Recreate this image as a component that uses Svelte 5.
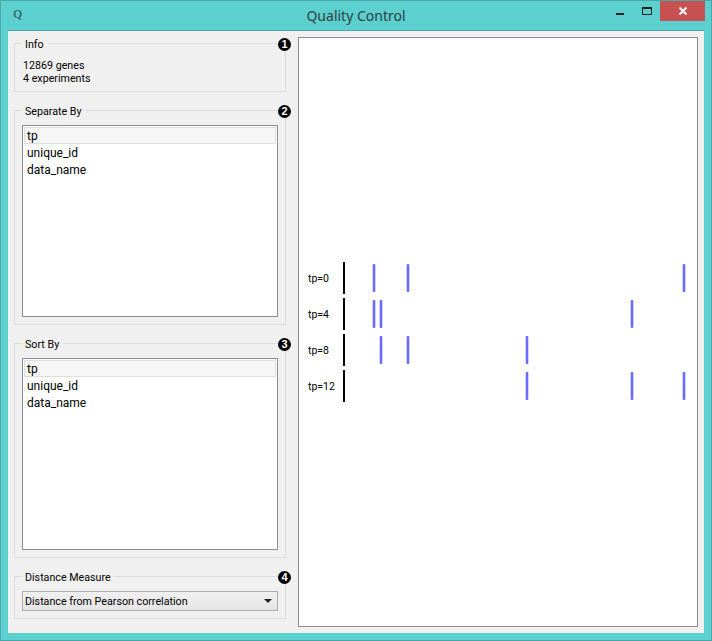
<script lang="ts">
  const groups = [
    { title: 'Separate By', badge: '2' },
    { title: 'Sort By', badge: '3' }
  ]
  const items = ['tp', 'unique_id', 'data_name']

  const rows = [
    { label: 'tp=0', y: 262, marks: [374, 408, 684] },
    { label: 'tp=4', y: 298, marks: [374, 381, 632] },
    { label: 'tp=8', y: 334, marks: [381, 408, 527] },
    { label: 'tp=12', y: 370, marks: [527, 632, 684] }
  ]
  // plot frame origin in window coordinates
  const ox = 299
  const oy = 38
</script>

<div class="window">
  <header class="titlebar">
    <span class="app-icon">Q</span>
    <span class="title">Quality Control</span>
    <div class="controls">
      <svg class="ctl" width="27" height="20" viewBox="0 0 27 20">
        <rect x="9" y="12" width="8" height="2" fill="#222" />
      </svg>
      <svg class="ctl" width="26" height="20" viewBox="0 0 26 20">
        <path d="M8.5 7.5h9v6h-9z" fill="none" stroke="#222" />
        <rect x="8" y="6" width="10" height="2" fill="#222" />
      </svg>
      <div class="close">
        <svg width="10" height="8" viewBox="0 0 10 8">
          <path d="M1.5 .5L8.5 7.5M8.5 .5L1.5 7.5" stroke="#fff" stroke-width="2" fill="none" />
        </svg>
      </div>
    </div>
  </header>

  <div class="body">
    <aside class="side">
      <section class="box info">
        <h3><span>Info</span></h3>
        <i class="badge">1</i>
        <p>12869 genes<br />4 experiments</p>
      </section>

      {#each groups as g}
        <section class="box listbox">
          <h3><span>{g.title}</span></h3>
          <i class="badge">{g.badge}</i>
          <ul>
            {#each items as item, i}
              <li class:current={i === 0}>{item}</li>
            {/each}
          </ul>
        </section>
      {/each}

      <section class="box distance">
        <h3><span>Distance Measure</span></h3>
        <i class="badge">4</i>
        <div class="combo">
          <span>Distance from Pearson correlation</span>
          <b class="arrow"></b>
        </div>
      </section>
    </aside>

    <main class="plot">
      <svg width="398" height="588" viewBox="0 0 398 588">
        {#each rows as r}
          <text x={308 - ox} y={r.y + 20 - oy} class="lbl">{r.label}</text>
          <rect x={343 - ox} y={r.y - oy} width="2" height="32" fill="#000" />
          {#each r.marks as m}
            <rect x={m - 1.3 - ox} y={r.y + 2 - oy} width="2.6" height="28" rx="1" fill="#6a6aff" />
          {/each}
        {/each}
      </svg>
    </main>
  </div>
</div>

<style>
  :global(body) {
    margin: 0;
    background: #5ccfcf;
  }

  .window {
    width: 712px;
    height: 641px;
    box-sizing: border-box;
    border: 1px solid #4aa8a8;
    padding: 0 7px 7px;
    background: #5ccfcf;
    display: flex;
    flex-direction: column;
    font-family: Roboto, "Noto Sans", sans-serif;
    font-size: 11px;
    color: #000;
  }

  .titlebar {
    height: 29px;
    flex: none;
    position: relative;
    display: flex;
    align-items: center;
    justify-content: center;
    border-bottom: 1px solid #4aa8a8;
  }

  .app-icon {
    position: absolute;
    left: 5px;
    top: 6px;
    font-family: "Liberation Serif", serif;
    font-weight: bold;
    font-size: 12px;
    color: #3c6f70;
  }

  .title {
    font-family: "Noto Sans", sans-serif;
    font-size: 14px;
    color: #2f3f40;
  }

  .controls {
    position: absolute;
    right: -1px;
    top: 0;
    display: flex;
    align-items: flex-start;
  }

  .ctl {
    display: block;
  }

  .close {
    width: 45px;
    height: 20px;
    background: #c75050;
    display: flex;
    align-items: center;
    justify-content: center;
  }

  .body {
    flex: 1;
    background: #f0f0f0;
    padding: 6px;
    display: flex;
    gap: 12px;
    min-height: 0;
  }

  .side {
    width: 272px;
    flex: none;
    display: flex;
    flex-direction: column;
    gap: 18px;
    padding-top: 6px;
  }

  .box {
    position: relative;
    box-sizing: border-box;
    border: 1px solid #dcdcdc;
  }

  .box h3 {
    margin: 0;
    position: absolute;
    left: 6px;
    top: -6px;
    font: inherit;
    font-size: 10.7px;
    line-height: 14px;
  }

  .box h3 span {
    background: #f0f0f0;
    padding: 0 4px;
    display: block;
  }

  .badge {
    position: absolute;
    right: -6px;
    top: -6px;
    width: 13px;
    height: 13px;
    border-radius: 50%;
    background: #000;
    color: #fff;
    font: normal bold 11px/13px "Liberation Sans", sans-serif;
    text-align: center;
  }

  .info {
    height: 49px;
  }

  .info p {
    margin: 15px 0 0 8px;
    line-height: 13px;
    font-size: 10.7px;
  }

  .listbox {
    height: 215px;
    padding: 14px 7px 6px;
  }

  ul {
    margin: 0;
    padding: 1px;
    list-style: none;
    box-sizing: border-box;
    height: 192px;
    width: 256px;
    background: #fff;
    border: 1px solid #8c8c96;
  }

  li {
    height: 17px;
    line-height: 19px;
    padding-left: 3px;
    font-size: 12px;
    box-sizing: border-box;
  }

  li.current {
    background: #f6f6f6;
    border: 1px solid #dedede;
    line-height: 17px;
    padding-left: 2px;
  }

  .distance {
    height: 43px;
    padding: 14px 7px 0;
  }

  .combo {
    box-sizing: border-box;
    height: 20px;
    width: 256px;
    border: 1px solid #acacac;
    background: linear-gradient(#f0f0f0, #e5e5e5);
    display: flex;
    align-items: center;
    justify-content: space-between;
    padding: 0 5px 0 2px;
    font-size: 10.7px;
  }

  .arrow {
    width: 0;
    height: 0;
    border-left: 4px solid transparent;
    border-right: 4px solid transparent;
    border-top: 4px solid #222;
  }

  .plot {
    flex: none;
    width: 400px;
    height: 590px;
    box-sizing: border-box;
    background: #fff;
    border: 1px solid #8c8c96;
  }

  .plot svg {
    display: block;
  }

  .lbl {
    font-size: 10.5px;
    fill: #000;
  }
</style>
